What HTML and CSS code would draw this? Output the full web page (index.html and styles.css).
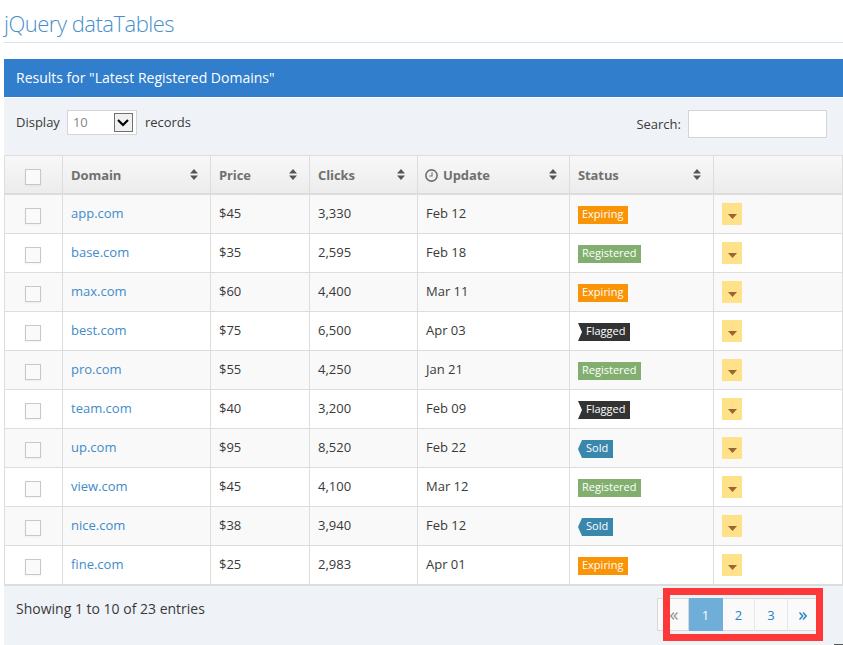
FILE: index.html
```
<!DOCTYPE html>
<html lang="en">
<head>
<meta charset="utf-8">
<title>jQuery dataTables</title>
<link rel="stylesheet" href="styles.css">
</head>
<body>
<svg class="defs" width="0" height="0">
  <symbol id="sort" viewBox="0 0 8 11"><path d="M4 0L8 4.5H0ZM0 6.5H8L4 11Z"/></symbol>
  <symbol id="caret" viewBox="0 0 9 5"><path d="M0 0H9L4.5 5Z"/></symbol>
</svg>
<h3 class="title">jQuery dataTables</h3>
<div class="table-header">Results for "Latest Registered Domains"</div>
<div class="toolbar">
  <div class="length">Display <span class="select">10<span class="arrow"><svg width="12" height="8" viewBox="0 0 12 8"><path d="M1 1L6 6L11 1"/></svg></span></span> records</div>
  <label class="search">Search: <input type="text"></label>
</div>
<table>
  <colgroup><col class="c1"><col class="c2"><col class="c3"><col class="c4"><col class="c5"><col class="c6"><col class="c7"></colgroup>
  <thead>
    <tr>
      <th class="center"><i class="box"></i></th>
      <th><div class="head">Domain<svg class="sort"><use href="#sort"/></svg></div></th>
      <th><div class="head">Price<svg class="sort"><use href="#sort"/></svg></div></th>
      <th><div class="head">Clicks<svg class="sort"><use href="#sort"/></svg></div></th>
      <th><div class="head"><svg class="clock" viewBox="0 0 12 12"><circle cx="6" cy="6" r="5.2"/><path d="M6.5 3V6.5H4"/></svg>Update<svg class="sort"><use href="#sort"/></svg></div></th>
      <th><div class="head">Status<svg class="sort"><use href="#sort"/></svg></div></th>
      <th></th>
    </tr>
  </thead>
  <tbody id="rows"></tbody>
</table>
<div class="footer">
  <div class="info">Showing 1 to 10 of 23 entries</div>
  <div class="pager">
    <span class="page prev"><svg class="angles" viewBox="0 0 8 8"><path d="M4 .5L.8 4L4 7.5M7.5 .5L4.3 4L7.5 7.5"/></svg></span><span class="page active">1</span><span class="page p2">2</span><span class="page p3">3</span><span class="page next"><svg class="angles" viewBox="0 0 8 8"><path d="M.5 .5L3.7 4L.5 7.5M4 .5L7.2 4L4 7.5"/></svg></span>
    <div class="highlight"></div>
  </div>
  <i class="corner"></i>
</div>
<script src="rows.js"></script>
</body>
</html>
```
FILE: rows.js
```
const rows = [
  ["app.com", "$45", "3,330", "Feb 12", "Expiring"],
  ["base.com", "$35", "2,595", "Feb 18", "Registered"],
  ["max.com", "$60", "4,400", "Mar 11", "Expiring"],
  ["best.com", "$75", "6,500", "Apr 03", "Flagged"],
  ["pro.com", "$55", "4,250", "Jan 21", "Registered"],
  ["team.com", "$40", "3,200", "Feb 09", "Flagged"],
  ["up.com", "$95", "8,520", "Feb 22", "Sold"],
  ["view.com", "$45", "4,100", "Mar 12", "Registered"],
  ["nice.com", "$38", "3,940", "Feb 12", "Sold"],
  ["fine.com", "$25", "2,983", "Apr 01", "Expiring"]
];
document.getElementById("rows").innerHTML = rows.map(([domain, price, clicks, date, status]) =>
  `<tr><td class="center"><i class="box"></i></td><td><a>${domain}</a></td><td>${price}</td><td>${clicks}</td><td>${date}</td>` +
  `<td><span class="label ${status.toLowerCase()}">${status}</span></td>` +
  `<td><span class="menu"><svg width="9" height="5"><use href="#caret"/></svg></span></td></tr>`
).join("");
```
FILE: styles.css
```
* { box-sizing: border-box; }
body {
  margin: 0;
  padding-left: 4px;
  width: 843px;
  height: 645px;
  overflow: hidden;
  background: #fff;
  color: #393939;
  font: 13px/20px "Open Sans", sans-serif;
}
.defs { display: block; height: 0; }
.title {
  margin: 0 0 16px;
  height: 43px;
  padding-top: 9px;
  border-bottom: 1px solid #d5e3ef;
  color: #478fca;
  font-size: 22px;
  line-height: 29px;
  font-weight: 300;
  letter-spacing: -.5px;
}
.table-header {
  height: 38px;
  padding-left: 12px;
  background: #307ecc;
  color: #fff;
  font-size: 14px;
  line-height: 38px;
}
.toolbar {
  display: flex;
  justify-content: space-between;
  margin-top: 1px;
  height: 57px;
  padding: 12px 16px 0 12px;
  background: #eff3f8;
}
.length, .search { display: flex; }
.length { height: 25px; line-height: 25px; }
.select {
  display: flex;
  justify-content: space-between;
  width: 70px;
  height: 25px;
  margin: 0 8px 0 7px;
  padding: 0 3px 0 5px;
  border: 1px solid #d5d5d5;
  background: #fff;
  color: #858585;
  line-height: 23px;
}
.arrow {
  display: flex;
  align-items: center;
  justify-content: center;
  width: 19px;
  height: 19px;
  margin-top: 2px;
  border: 1px solid #707070;
  background: #f0f0f0;
}
.arrow path { fill: none; stroke: #000; stroke-width: 2.2; }
.search { line-height: 29px; }
.search input {
  width: 139px;
  height: 28px;
  margin: 0 0 0 7px;
  border: 1px solid #d5d5d5;
  background: #fff;
}
table {
  width: 839px;
  table-layout: fixed;
  border-collapse: separate;
  border-spacing: 0;
  border-bottom: 2px solid #ddd;
}
.c1 { width: 58px; }
.c2 { width: 148px; }
.c3 { width: 99px; }
.c4 { width: 108px; }
.c5 { width: 152px; }
.c6 { width: 144px; }
.c7 { width: 130px; }
th, td {
  height: 39px;
  padding: 0 8px;
  border-left: 1px solid #ddd;
  border-top: 1px solid #ddd;
  text-align: left;
  vertical-align: top;
}
th:last-child, td:last-child { border-right: 1px solid #ddd; }
th {
  height: 38px;
  background: linear-gradient(#f8f8f8, #ececec);
  color: #707070;
  font-weight: 700;
  letter-spacing: -.1px;
}
td { line-height: 37px; }
tbody tr:first-child td { height: 40px; border-top-width: 2px; }
tbody tr:nth-child(odd) { background: #f9f9f9; }
a { color: #428bca; }
.box {
  display: block;
  width: 16px;
  height: 16px;
  margin: 13px 0 0 12px;
  border: 1px solid #c8c8c8;
  background: #fafafa;
  box-shadow: 0 1px 2px rgba(0, 0, 0, .05);
}
.head { display: flex; align-items: center; height: 37px; padding-top: 1px; }
.sort { width: 8px; height: 11px; margin: -2px 4px 0 auto; fill: #555; }
.clock { width: 13px; height: 13px; margin: 0 5px 0 -1px; fill: none; stroke: #707070; stroke-width: 1.5; }
.clock path { stroke-width: 1; }
.label {
  display: block;
  width: 50px;
  height: 18px;
  margin-top: 11px;
  padding-left: 4px;
  color: #fff;
  font-size: 11px;
  line-height: 16px;
}
.expiring { background: #f89406; }
.registered { width: 63px; background: #82af6f; }
.flagged {
  width: 52px;
  padding-left: 8px;
  background: #333;
  clip-path: polygon(0 0, 100% 0, 100% 100%, 0 100%, 4px 50%);
}
.sold {
  width: 35px;
  padding-left: 8px;
  background: #3a87ad;
  clip-path: polygon(4px 0, 100% 0, 100% 100%, 4px 100%, 0 50%);
}
.menu {
  display: flex;
  justify-content: center;
  width: 20px;
  height: 22px;
  margin-top: 8px;
  padding-top: 11px;
  background: #fee188;
}
.menu svg { fill: #963; }
.footer {
  display: flex;
  justify-content: space-between;
  position: relative;
  height: 59px;
  padding: 12px 26px 0 12px;
  background: #eff3f8;
}
.info { padding-top: 1px; font-size: 14px; }
.pager { display: flex; position: relative; width: 160px; height: 33px; }
.page {
  height: 33px;
  border: 1px solid #d9d9d9;
  border-left-width: 0;
  background: #fafafa;
  color: #2283c5;
  line-height: 33px;
  text-align: center;
}
.prev { width: 32px; border-left-width: 1px; color: #999; }
.active { width: 34px; border-color: #6faed9; background: #6faed9; color: #fff; }
.p2 { width: 32px; border-right-color: #e0e8eb; }
.p3 { width: 33px; border-right-color: #e0e8eb; }
.next { width: 29px; }
.prev, .next { display: flex; align-items: center; justify-content: center; padding-top: 3px; }
.prev { padding-left: 2px; }
.next { padding-left: 2px; }
.angles { width: 8px; height: 8px; fill: none; stroke: currentColor; stroke-width: 1.4; }
.highlight {
  position: absolute;
  left: 6px;
  top: -10px;
  width: 160px;
  height: 53px;
  border: 7px solid #fc3838;
}
.corner { position: absolute; right: 0; bottom: 0; width: 9px; height: 1px; background: #555; }
```
